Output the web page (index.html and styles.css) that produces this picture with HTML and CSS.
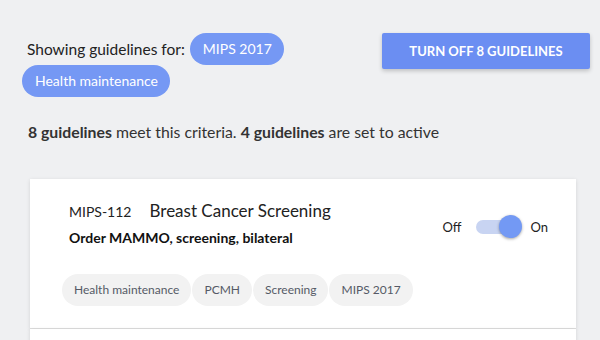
FILE: index.html
```html
<!DOCTYPE html>
<html lang="en">
<head>
    <meta charset="UTF-8">
    <title>Guidelines</title>
    <link rel="stylesheet" href="styles.css">
</head>
<body>
    <div class="page">
        <div class="top">
            <div class="filters">
                <span class="filters-label">Showing guidelines for:</span>
                <span class="chip">MIPS 2017</span>
                <span class="chip">Health maintenance</span>
            </div>
            <button class="turn-off">Turn off 8 guidelines</button>
        </div>

        <p class="summary"><b>8 guidelines</b> meet this criteria. <b>4 guidelines</b> are set to active</p>

        <div class="list">
            <div class="card">
                <div class="card-head">
                    <div class="card-text">
                        <div class="card-title">
                            <span class="code">MIPS-112</span>
                            <span class="name">Breast Cancer Screening</span>
                        </div>
                        <div class="order">Order MAMMO, screening, bilateral</div>
                    </div>
                    <div class="switch">
                        <span>Off</span>
                        <span class="track"><span class="knob"></span></span>
                        <span>On</span>
                    </div>
                </div>
                <div class="tags">
                    <span class="tag">Health maintenance</span>
                    <span class="tag">PCMH</span>
                    <span class="tag">Screening</span>
                    <span class="tag">MIPS 2017</span>
                </div>
            </div>
            <div class="card"></div>
        </div>
    </div>
</body>
</html>
```

FILE: styles.css
```css
body {
    margin: 0;
    background-color: #eff0f2;
    font-family: 'Lato', sans-serif;
    color: #222;
    overflow: hidden;
}
.page {
    padding: 33px 10px 0 22px;
}
.top {
    display: flex;
    justify-content: space-between;
    align-items: flex-start;
}
.filters {
    display: flex;
    flex-wrap: wrap;
    align-items: center;
    width: 275px;
}
.filters-label {
    font-size: 15.5px;
    margin: 0 5px 0 5px;
}
.chip {
    background-color: #7598f4;
    color: white;
    font-size: 14px;
    height: 32px;
    line-height: 32px;
    padding: 0 12px 0 13px;
    border-radius: 16px;
}
.turn-off {
    width: 208px;
    height: 36px;
    background-color: #6b8ef2;
    color: white;
    border: none;
    border-radius: 2px;
    font-family: 'Lato', sans-serif;
    font-weight: bold;
    font-size: 13px;
    text-transform: uppercase;
    box-shadow: 0 2px 4px rgba(0, 0, 0, 0.2);
}
.summary {
    margin: 25px 0 0 6px;
    font-size: 15.8px;
    color: #333;
}
.list {
    margin: 38px 14px 0 8px;
}
.card {
    background-color: white;
    box-shadow: 0 1px 4px rgba(0, 0, 0, 0.12);
    padding: 21px 28px 22px 32px;
    border-bottom: 1px solid #ddd;
    min-height: 100px;
}
.card-head {
    display: flex;
    justify-content: space-between;
    align-items: center;
    padding-left: 7px;
}
.card-title {
    display: flex;
    align-items: baseline;
}
.code {
    font-size: 14px;
    margin-right: 18px;
}
.name {
    font-size: 17px;
}
.order {
    margin-top: 8px;
    font-size: 14px;
    font-weight: bold;
    color: #111;
}
.switch {
    display: flex;
    align-items: center;
    font-size: 13px;
    margin-top: 8px;
}
.track {
    position: relative;
    width: 44px;
    height: 14px;
    border-radius: 7px;
    background-color: #c8d4f2;
    margin: 0 10px 0 15px;
}
.knob {
    position: absolute;
    top: -5px;
    left: 23px;
    width: 23px;
    height: 23px;
    border-radius: 50%;
    background-color: #7399f4;
    box-shadow: 0 1px 3px rgba(0, 0, 0, 0.35);
}
.tags {
    display: flex;
    gap: 1px;
    margin-top: 28px;
}
.tag {
    background-color: #f2f2f2;
    color: #555a66;
    font-size: 12px;
    height: 32px;
    line-height: 32px;
    padding: 0 12px;
    border-radius: 16px;
}
```
